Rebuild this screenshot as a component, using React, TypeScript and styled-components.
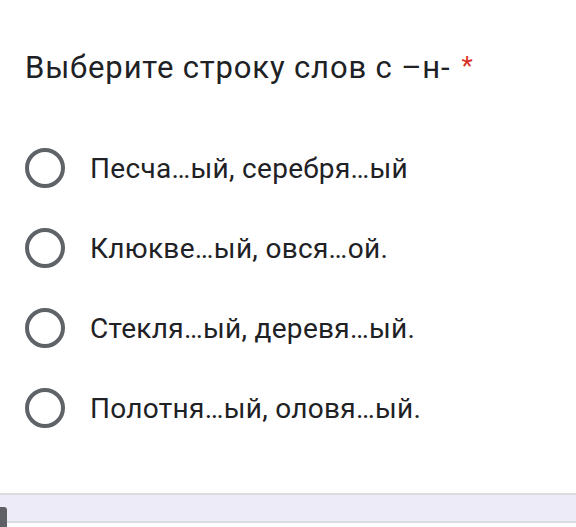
import { createGlobalStyle } from "styled-components";
import styled from "styled-components";

const GlobalStyle = createGlobalStyle`
  html, body {
    margin: 0;
    padding: 0;
    background: #ffffff;
    font-family: Roboto, "Noto Sans", Arial, sans-serif;
    color: #202124;
  }
`;

const Page = styled.div`
  width: 576px;
  height: 527px;
  display: flex;
  flex-direction: column;
  overflow: hidden;
`;

const Card = styled.div`
  padding: 48px 0 0 25px;
  height: 447px;
  box-sizing: border-box;
`;

const Title = styled.div`
  font-size: 31px;
  line-height: 36px;
  letter-spacing: 0.85px;
`;

const Required = styled.span`
  color: #d93025;
  font-size: 26px;
  margin-left: 11px;
  letter-spacing: 0;
  vertical-align: 3px;
`;

const Options = styled.div`
  display: flex;
  flex-direction: column;
  gap: 40px;
  margin-top: 62px;
`;

const Option = styled.label`
  display: flex;
  align-items: center;
  gap: 25px;
  height: 40px;
  font-size: 28px;
  letter-spacing: 0.3px;
`;

const Radio = styled.span`
  width: 40px;
  height: 40px;
  border: 4px solid #5f6368;
  border-radius: 50%;
  box-sizing: border-box;
  flex-shrink: 0;
`;

const Footer = styled.div`
  height: 26px;
  margin-top: 46px;
  background: #eeebf8;
  border-top: 2px solid #dadce0;
  border-bottom: 2px solid #dadce0;
  position: relative;
`;

const Scroll = styled.div`
  position: absolute;
  left: 0;
  top: 12px;
  width: 7px;
  height: 30px;
  background: #5f5f66;
  border-radius: 0 3px 0 0;
`;

const options = [
  "Песча...ый, серебря...ый",
  "Клюкве...ый, овся...ой.",
  "Стекля...ый, деревя...ый.",
  "Полотня...ый, оловя...ый.",
];

export default function App() {
  return (
    <Page>
      <GlobalStyle />
      <Card>
        <Title>
          Выберите строку слов с –н-<Required>*</Required>
        </Title>
        <Options>
          {options.map((o) => (
            <Option key={o}>
              <Radio />
              {o.replace(/\.\.\./g, "…")}
            </Option>
          ))}
        </Options>
      </Card>
      <Footer>
        <Scroll />
      </Footer>
    </Page>
  );
}
